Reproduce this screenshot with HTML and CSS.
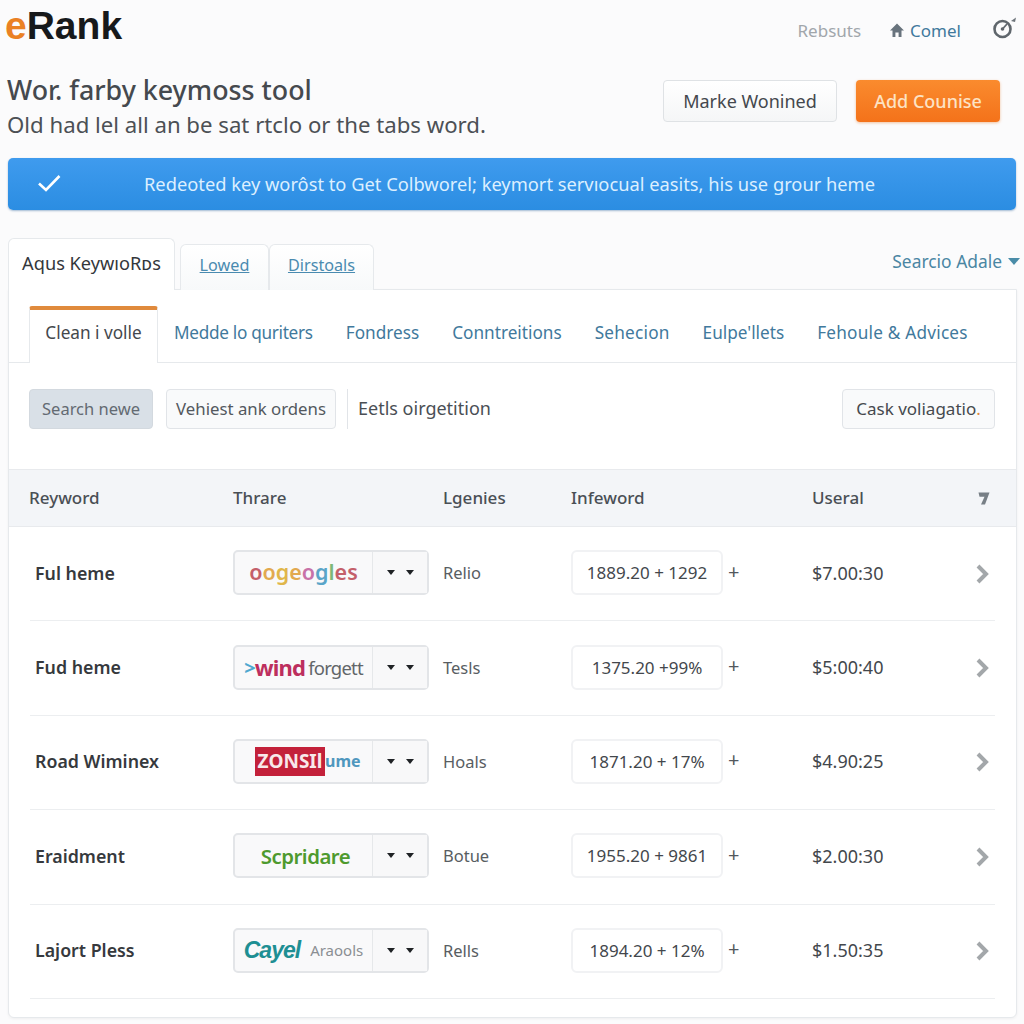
FILE: index.html
```html
<!DOCTYPE html>
<html lang="en">
<head>
    <meta charset="UTF-8">
    <meta name="viewport" content="width=device-width, initial-scale=1.0">
    <title>eRank</title>
    <link rel="stylesheet" href="styles.css">
</head>
<body>
    <header class="topbar">
        <div class="logo"><span class="logo-e">e</span>Rank</div>
        <nav class="topnav">
            <a class="topnav-muted">Rebsuts</a>
            <a class="topnav-home">
                <svg width="14" height="14" viewBox="0 0 14 14"><path d="M7 0.5 L14 7.5 H11.5 V14 H8.6 V9.5 H5.4 V14 H2.5 V7.5 H0 Z" fill="#68737d"/></svg>
                Comel
            </a>
            <svg class="topnav-clock" width="26" height="24" viewBox="0 0 26 24"><circle cx="10.5" cy="13" r="8" fill="none" stroke="#5f666c" stroke-width="2.6"/><circle cx="10.5" cy="13" r="1.8" fill="#5f666c"/><path d="M10.5 13 L15 8" stroke="#5f666c" stroke-width="1.8"/><path d="M19 5 L24 1.5 L23 6 Z" fill="#6d747a"/></svg>
        </nav>
    </header>

    <section class="intro">
        <div>
            <h1>Wor. farby keymoss tool</h1>
            <p>Old had lel all an be sat rtclo or the tabs word.</p>
        </div>
        <div class="intro-actions">
            <button class="btn-light">Marke Wonined</button>
            <button class="btn-orange">Add Counise</button>
        </div>
    </section>

    <div class="banner">
        <svg width="24" height="18" viewBox="0 0 24 18"><path d="M2 9.5 L9 16 L22.5 2" fill="none" stroke="#fff" stroke-width="2.6"/></svg>
        <span>Redeoted key worôst to Get Colbworel; keymort servıocual easits, his use grour heme</span>
    </div>

    <div class="tabs">
        <a class="tab tab-active">Aqus KeywıoRᴅs</a>
        <a class="tab tab-link tab-lowed">Lowed</a>
        <a class="tab tab-link tab-details">Dirstoals</a>
        <a class="tabs-side">Searcio Adale <i class="tabs-caret"></i></a>
    </div>

    <main class="panel">
        <div class="subtabs">
            <a class="subtab subtab-active">Clean i volle</a>
            <a class="subtab subtab-tight">Medde lo quriters</a>
            <a class="subtab">Fondress</a>
            <a class="subtab">Conntreitions</a>
            <a class="subtab subtab-wide">Sehecion</a>
            <a class="subtab">Eulpe'llets</a>
            <a class="subtab subtab-wide">Fehoule &amp; Advices</a>
        </div>

        <div class="toolbar">
            <button class="tool tool-on">Search newe</button>
            <button class="tool tool-second">Vehiest ank ordens</button>
            <span class="tool-text">Eetls oirgetition</span>
            <button class="tool tool-right">Cask voliagatio<span class="dot">.</span></button>
        </div>

        <div class="row-head">
            <span>Reyword</span>
            <span>Thrare</span>
            <span>Lgenies</span>
            <span>Infeword</span>
            <span>Useral</span>
            <svg width="12" height="13" viewBox="0 0 12 13"><path d="M0.5 0.5 H11.5 L7 12.5 H3 L6.5 4.8 H1.5 Z" fill="#777f86"/></svg>
        </div>

        <div class="row">
            <span class="kw">Ful heme</span>
            <div class="pick">
                <span class="brand brand-google"><b class="c1">o</b><b class="c2">o</b><b class="c3">g</b><b class="c2">e</b><b class="c4">o</b><b class="c5">g</b><b class="c6">l</b><b class="c1">e</b><b class="c1">s</b></span>
                <span class="pick-arrows"><i></i><i></i></span>
            </div>
            <span class="lbl">Relio</span>
            <div class="val"><span class="val-box">1889.20 + 1292</span><span class="plus">+</span></div>
            <span class="price">$7.00:30</span>
            <svg class="chev" width="14" height="20" viewBox="0 0 14 20"><path d="M3 2 L11 10 L3 18" fill="none" stroke="#a3a7aa" stroke-width="4"/></svg>
        </div>

        <div class="row">
            <span class="kw">Fud heme</span>
            <div class="pick">
                <span class="brand brand-wind"><b class="wind-arrow">&gt;</b><b class="wind-name">wind</b><span class="wind-rest">forgett</span></span>
                <span class="pick-arrows"><i></i><i></i></span>
            </div>
            <span class="lbl">Tesls</span>
            <div class="val"><span class="val-box">1375.20 +99%</span><span class="plus">+</span></div>
            <span class="price">$5:00:40</span>
            <svg class="chev" width="14" height="20" viewBox="0 0 14 20"><path d="M3 2 L11 10 L3 18" fill="none" stroke="#a3a7aa" stroke-width="4"/></svg>
        </div>

        <div class="row">
            <span class="kw">Road Wiminex</span>
            <div class="pick">
                <span class="brand brand-zone"><b class="zone-box">ZONSIl</b><b class="zone-rest">ume</b></span>
                <span class="pick-arrows"><i></i><i></i></span>
            </div>
            <span class="lbl">Hoals</span>
            <div class="val"><span class="val-box">1871.20 + 17%</span><span class="plus">+</span></div>
            <span class="price">$4.90:25</span>
            <svg class="chev" width="14" height="20" viewBox="0 0 14 20"><path d="M3 2 L11 10 L3 18" fill="none" stroke="#a3a7aa" stroke-width="4"/></svg>
        </div>

        <div class="row">
            <span class="kw">Eraidment</span>
            <div class="pick">
                <span class="brand brand-green">Scpridare</span>
                <span class="pick-arrows"><i></i><i></i></span>
            </div>
            <span class="lbl">Botue</span>
            <div class="val"><span class="val-box">1955.20 + 9861</span><span class="plus">+</span></div>
            <span class="price">$2.00:30</span>
            <svg class="chev" width="14" height="20" viewBox="0 0 14 20"><path d="M3 2 L11 10 L3 18" fill="none" stroke="#a3a7aa" stroke-width="4"/></svg>
        </div>

        <div class="row">
            <span class="kw">Lajort Pless</span>
            <div class="pick">
                <span class="brand brand-cayel"><b class="cayel-name">Cayel</b><span class="cayel-rest">Araools</span></span>
                <span class="pick-arrows"><i></i><i></i></span>
            </div>
            <span class="lbl">Rells</span>
            <div class="val"><span class="val-box">1894.20 + 12%</span><span class="plus">+</span></div>
            <span class="price">$1.50:35</span>
            <svg class="chev" width="14" height="20" viewBox="0 0 14 20"><path d="M3 2 L11 10 L3 18" fill="none" stroke="#a3a7aa" stroke-width="4"/></svg>
        </div>
    </main>
</body>
</html>
```

FILE: styles.css
```css
* {
    box-sizing: border-box;
}
body {
    font-family: "Noto Sans", "Open Sans", sans-serif;
    background-color: #fbfbfc;
    color: #3d4248;
    margin: 0;
    padding: 0 8px;
    height: 1024px;
    overflow: hidden;
}
button {
    font-family: inherit;
}

/* top bar */
.topbar {
    height: 70px;
    display: flex;
    justify-content: space-between;
    align-items: flex-start;
}
.logo {
    font-family: "Liberation Sans", Arial, sans-serif;
    font-size: 39px;
    line-height: 52px;
    font-weight: bold;
    color: #17191b;
    margin-left: -3px;
}
.logo-e {
    color: #ea8124;
}
.topnav {
    display: flex;
    align-items: center;
    height: 60px;
    font-size: 17px;
    margin-right: -2px;
}
.topnav-muted {
    color: #a1a6ab;
    margin-right: 29px;
}
.topnav-home {
    color: #41799c;
    display: flex;
    align-items: center;
    gap: 6px;
    margin-right: 31px;
}
.topnav-clock {
    margin-bottom: 4px;
}

/* heading */
.intro {
    height: 88px;
    display: flex;
    justify-content: space-between;
    align-items: flex-start;
    padding-right: 16px;
}
h1 {
    font-size: 26.8px;
    line-height: 40px;
    font-weight: 500;
    color: #45494e;
    margin: 0;
    margin-left: -1px;
}
.intro p {
    font-size: 22.2px;
    line-height: 30px;
    color: #4c5055;
    margin: 0;
    margin-left: -1px;
}
.intro-actions {
    display: flex;
    gap: 19px;
    margin-top: 10px;
}
.btn-light {
    width: 174px;
    height: 42px;
    background: linear-gradient(#ffffff, #f5f6f7);
    border: 1px solid #dfe2e5;
    border-radius: 4px;
    font-size: 18px;
    color: #44484d;
}
.btn-orange {
    width: 144px;
    height: 42px;
    background: linear-gradient(#fa8b2e, #f4721a);
    border: none;
    border-radius: 4px;
    box-shadow: 0 1px 3px rgba(230, 110, 20, 0.4);
    font-size: 18px;
    font-weight: 500;
    color: #fde3c4;
}

/* banner */
.banner {
    height: 52px;
    display: flex;
    align-items: center;
    padding-left: 29px;
    background: linear-gradient(#3f9bee, #2b8de2);
    border-radius: 5px;
    box-shadow: 0 1px 2px rgba(30, 90, 150, 0.4);
    color: #dcefff;
    font-size: 18.3px;
}
.banner svg {
    margin-bottom: 3px;
}
.banner span {
    margin-left: 83px;
    padding-bottom: 2px;
}

/* tabs */
.tabs {
    height: 52px;
    margin-top: 28px;
    display: flex;
    align-items: flex-end;
    position: relative;
    z-index: 1;
    margin-bottom: -1px;
}
.tab {
    display: flex;
    align-items: center;
    justify-content: center;
    border: 1px solid #e6e9ec;
    border-bottom: none;
    border-radius: 6px 6px 0 0;
    font-size: 17px;
}
.tab-active {
    width: 167px;
    height: 52px;
    background-color: #ffffff;
    color: #33373b;
    font-size: 18.2px;
    padding-bottom: 4px;
    margin-right: 5px;
}
.tab-link {
    height: 46px;
    color: #4a8bb0;
    text-decoration: underline;
    background: linear-gradient(#ffffff, #f7f9fa);
    font-size: 16.2px;
    padding-bottom: 6px;
}
.tab-lowed {
    width: 89px;
}
.tab-details {
    width: 105px;
}
.tabs-side {
    margin-left: auto;
    margin-right: -4px;
    align-self: center;
    color: #4a86a3;
    font-size: 17.4px;
    display: flex;
    align-items: center;
    gap: 6px;
    margin-bottom: 6px;
}
.tabs-caret {
    width: 0;
    height: 0;
    border-left: 6px solid transparent;
    border-right: 6px solid transparent;
    border-top: 7px solid #4a8ca8;
}

/* main panel */
.panel {
    height: 729px;
    width: 1009px;
    background-color: #ffffff;
    border: 1px solid #e6e9ec;
    border-radius: 0 0 6px 6px;
    box-shadow: 0 1px 3px rgba(0, 0, 0, 0.05);
}
.subtabs {
    height: 73px;
    padding: 16px 0 0 20px;
    display: flex;
    align-items: flex-end;
    gap: 1px;
    border-bottom: 1px solid #e6e9ec;
}
.subtab {
    height: 56px;
    display: flex;
    align-items: center;
    padding: 0 16px 4px;
    color: #41799c;
    font-size: 17.2px;
    white-space: nowrap;
}
.subtab-tight {
    letter-spacing: -0.3px;
}
.subtab-wide {
    letter-spacing: 0.22px;
}
.subtab-active {
    width: 129px;
    height: 57px;
    justify-content: center;
    padding: 0 0 8px;
    margin-right: -1px;
    color: #44484d;
    background-color: #ffffff;
    border: 1px solid #e6e9ec;
    border-top: 4px solid #e08a3c;
    border-bottom: none;
    border-radius: 3px 3px 0 0;
    margin-bottom: -1px;
}

/* toolbar */
.toolbar {
    height: 107px;
    padding: 26px 21px 0 20px;
    display: flex;
    align-items: flex-start;
    border-bottom: 1px solid #e8eaed;
}
.tool {
    height: 40px;
    border: 1px solid #e1e4e8;
    border-radius: 4px;
    background-color: #f9fafb;
    font-size: 16.8px;
    color: #53585e;
    padding: 0 0 2px;
}
.tool-on {
    width: 124px;
    background-color: #d9e0e7;
    border-color: #d3d9df;
    color: #636a72;
    font-size: 16.5px;
}
.tool-second {
    width: 170px;
    margin-left: 13px;
}
.tool-text {
    height: 40px;
    line-height: 38px;
    margin-left: 11px;
    padding-left: 10px;
    border-left: 1px solid #e1e4e8;
    font-size: 18px;
    color: #4a4f55;
}
.tool-right {
    width: 153px;
    margin-left: auto;
    color: #45494e;
    font-size: 17px;
}
.dot {
    color: #e08a3c;
}

/* table */
.row-head, .row {
    display: grid;
    grid-template-columns: 204px 210px 128px 241px 1fr 22px;
    align-items: center;
}
.row-head {
    height: 57px;
    padding: 0 26px 2px 20px;
    background-color: #f3f5f8;
    border-bottom: 1px solid #e8eaed;
    font-size: 17px;
    font-weight: 500;
    color: #4a4f55;
}
.row-head svg {
    justify-self: end;
    margin-top: 3px;
}
.row {
    height: 94.4px;
    margin: 0 21px 0 21px;
    padding-right: 6px;
    grid-template-columns: 203px 210px 128px 241px 1fr 22px;
    border-bottom: 1px solid #eceef0;
}
.kw {
    font-size: 17.8px;
    font-weight: 600;
    color: #36393d;
    padding: 0 0 2px 5px;
}
.pick {
    width: 196px;
    height: 45px;
    margin-bottom: 2px;
    display: flex;
    border: 2px solid #e3e5e8;
    border-radius: 5px;
    background-color: #f9f9fa;
}
.brand {
    width: 138px;
    display: flex;
    align-items: center;
    justify-content: center;
    border-right: 1px solid #e6e8ea;
    white-space: nowrap;
    font-size: 20px;
}
.pick-arrows {
    flex: 1;
    display: flex;
    align-items: center;
    justify-content: center;
    gap: 11px;
    background-color: #f8f8f9;
}
.pick-arrows i {
    width: 0;
    height: 0;
    border-left: 4px solid transparent;
    border-right: 4px solid transparent;
    border-top: 5px solid #1f2225;
}
.lbl {
    font-size: 16.5px;
    color: #585d62;
    padding-bottom: 2px;
}
.val {
    display: flex;
    align-items: center;
    margin-bottom: 2px;
}
.val-box {
    width: 152px;
    height: 45px;
    display: flex;
    align-items: center;
    justify-content: center;
    background-color: #ffffff;
    border: 2px solid #f1f2f4;
    border-radius: 6px;
    font-size: 17px;
    color: #43474c;
    white-space: nowrap;
}
.plus {
    margin-left: 5px;
    font-size: 20px;
    color: #53585d;
    padding-bottom: 3px;
}
.price {
    font-size: 18px;
    color: #43474c;
    padding-bottom: 2px;
}
.chev {
    justify-self: end;
}

/* brand marks in the pickers */
.brand-google {
    font-size: 21.5px;
    padding-bottom: 2px;
}
.brand-google b {
    font-weight: 600;
}
.c1 { color: #c4606a; }
.c2 { color: #e2a94f; }
.c3 { color: #e0b64a; }
.c4 { color: #c872a8; }
.c5 { color: #5aa5c8; }
.c6 { color: #7db878; }
.brand-wind {
    letter-spacing: -0.8px;
}
.wind-arrow {
    color: #4fa8d0;
}
.wind-name {
    color: #bd2f5e;
    font-size: 22px;
}
.wind-rest {
    color: #626669;
    margin-left: 3px;
    font-size: 18.5px;
}
.brand-zone {
    justify-content: flex-start;
    padding-left: 20px;
}
.zone-box {
    width: 70px;
    height: 29px;
    line-height: 29px;
    background-color: #c3213a;
    color: #f8e8ea;
    font-size: 19px;
    text-align: center;
    overflow: hidden;
    white-space: nowrap;
}
.zone-rest {
    color: #4f97be;
    font-size: 16px;
}
.brand-green {
    color: #4e9a2e;
    font-weight: 600;
    font-size: 20.4px;
    letter-spacing: -0.5px;
    padding-left: 4px;
}
.cayel-name {
    color: #1e8f93;
    font-family: "Liberation Sans", Arial, sans-serif;
    font-style: italic;
    font-size: 23px;
    letter-spacing: -1px;
}
.cayel-rest {
    color: #8b8f93;
    font-size: 15px;
    margin-left: 10px;
}
```
